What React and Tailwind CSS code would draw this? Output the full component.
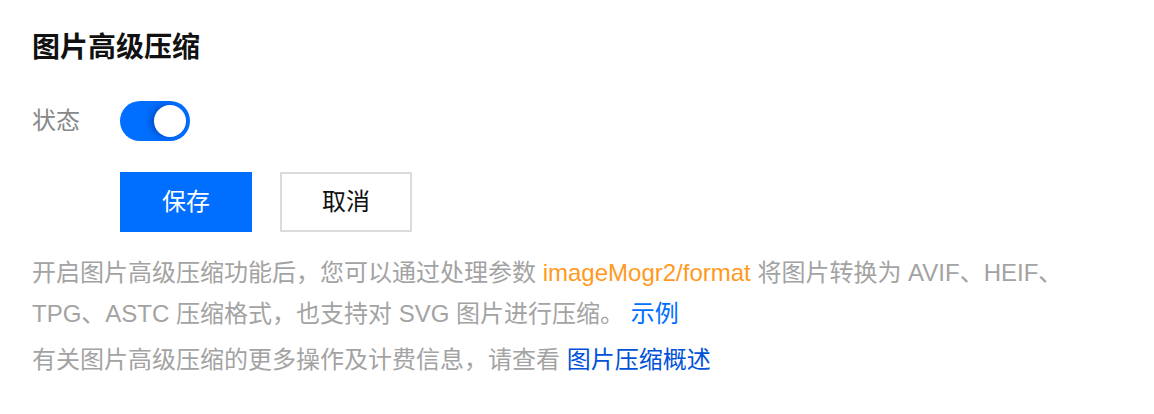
import { useState } from 'react';

export default function App() {
    const [enabled, setEnabled] = useState(true);

    return (
        <div className="min-h-screen bg-white px-8 pt-7 font-['Liberation_Sans','Noto_Sans_CJK_SC',sans-serif]">
            {/* Title */}
            <h2 className="text-[28px] leading-[40px] font-bold text-[#111]">图片高级压缩</h2>

            {/* Status row */}
            <div className="flex items-start mt-[33px]">
                <span className="w-[88px] text-[24px] leading-[40px] text-[#888]">状态</span>
                <button
                    onClick={() => setEnabled(!enabled)}
                    className={`w-[70px] h-[40px] rounded-full flex items-center px-[4px] ${enabled ? 'bg-[#006eff] justify-end' : 'bg-[#ccc] justify-start'}`}
                >
                    <span className="w-[32px] h-[32px] rounded-full bg-white shadow-[-4px_0_6px_rgba(0,30,110,0.35)]" />
                </button>
            </div>

            {/* Actions */}
            <div className="flex gap-[28px] ml-[88px] mt-[31px]">
                <button className="w-[132px] h-[60px] bg-[#006eff] text-white text-[24px]">保存</button>
                <button className="w-[132px] h-[60px] border-2 border-[#dcdcdc] bg-white text-[#111] text-[24px]">取消</button>
            </div>

            {/* Description */}
            <div className="mt-[20px] max-w-[1050px] text-[24px] text-[#a3a3a3]">
                <p className="leading-[41px]">
                    开启图片高级压缩功能后，您可以通过处理参数 <span className="text-[#ff9a1f]">imageMogr2/format</span> 将图片转换为 AVIF、HEIF、TPG、ASTC 压缩格式，也支持对 SVG 图片进行压缩。 <a className="text-[#006eff]">示例</a>
                </p>
                <p className="leading-[41px] mt-[5px]">
                    有关图片高级压缩的更多操作及计费信息，请查看 <a className="text-[#0052d9]">图片压缩概述</a>
                </p>
            </div>
        </div>
    );
}
